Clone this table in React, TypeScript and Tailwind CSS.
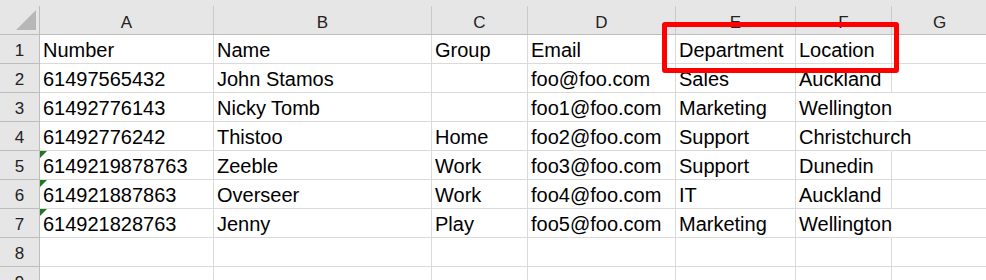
import React from 'react';

type Col = { key: string; width: string };

const columns: Col[] = [
  { key: 'A', width: 'w-[174px]' },
  { key: 'B', width: 'w-[218px]' },
  { key: 'C', width: 'w-[96px]' },
  { key: 'D', width: 'w-[148px]' },
  { key: 'E', width: 'w-[120px]' },
  { key: 'F', width: 'w-[96px]' },
  { key: 'G', width: 'w-[96px]' },
];

// rows of the sheet, one string per column A..F
const rows: string[][] = [
  ['Number', 'Name', 'Group', 'Email', 'Department', 'Location'],
  ['61497565432', 'John Stamos', '', 'foo@foo.com', 'Sales', 'Auckland'],
  ['61492776143', 'Nicky Tomb', '', 'foo1@foo.com', 'Marketing', 'Wellington'],
  ['61492776242', 'Thistoo', 'Home', 'foo2@foo.com', 'Support', 'Christchurch'],
  ['6149219878763', 'Zeeble', 'Work', 'foo3@foo.com', 'Support', 'Dunedin'],
  ['614921887863', 'Overseer', 'Work', 'foo4@foo.com', 'IT', 'Auckland'],
  ['614921828763', 'Jenny', 'Play', 'foo5@foo.com', 'Marketing', 'Wellington'],
  [],
  [],
  [],
];

// numbers stored as text get the little green flag
const flagged = new Set([4, 5, 6]);
// cells whose text spills into the next column hide the gridline
const spills = new Set(['2-5', '3-5', '6-5']);

const CornerTriangle = () => (
  <svg className="absolute left-0 top-0" width="39" height="34" viewBox="0 0 39 34">
    <polygon points="36,10 36,30 16,30" fill="#b7b7b7" />
  </svg>
);

const ErrorFlag = () => (
  <svg className="absolute left-0 top-0" width="7" height="7" viewBox="0 0 7 7">
    <polygon points="0,0 7,0 0,7" fill="#1e7a22" />
  </svg>
);

const App: React.FC = () => {
  return (
    <div
      className="relative w-[986px] h-[280px] overflow-hidden bg-white text-black"
      style={{ fontFamily: '"Liberation Sans", Arial, sans-serif' }}
    >
      {/* column headers */}
      <div className="flex h-[35px] bg-[#e6e6e6] border-b border-[#bdbdbd]">
        <div className="relative w-[40px] shrink-0 flex flex-col">
          <div className="h-[6px]" />
          <div className="flex-1 border-r border-[#bdbdbd]" />
          <CornerTriangle />
        </div>
        {columns.map((c) => (
          <div key={c.key} className={`${c.width} shrink-0 flex flex-col`}>
            <div className="h-[6px]" />
            <div className="flex-1 border-r border-[#cacaca] text-center text-[17px] leading-[20px] pt-[7px] text-[#222]">
              {c.key}
            </div>
          </div>
        ))}
      </div>

      {rows.map((row, r) => (
        <div key={r} className="flex h-[29px]">
          <div className="w-[40px] shrink-0 bg-[#e6e6e6] border-r border-b border-[#bdbdbd] text-center text-[17px] leading-[20px] pt-[6px] text-[#222]">
            {r + 1}
          </div>
          {columns.map((c, i) => {
            const text = row[i] ?? '';
            const spill = spills.has(`${r}-${i}`);
            return (
              <div
                key={c.key}
                className={`relative ${c.width} shrink-0 border-b border-[#dadada] pl-[3px] pt-[4px] text-[20px] leading-[23px] whitespace-nowrap ${
                  spill ? 'border-r border-r-transparent overflow-visible z-10' : 'border-r border-[#dadada] overflow-hidden'
                }`}
              >
                {i === 0 && flagged.has(r) && <ErrorFlag />}
                {text}
              </div>
            );
          })}
        </div>
      ))}

      {/* highlight box drawn over the Department / Location headers */}
      <div className="absolute left-[662px] top-[22px] w-[237px] h-[51px] border-[5px] border-[#ff0000] rounded-[3px] z-20" />
    </div>
  );
};

export default App;
